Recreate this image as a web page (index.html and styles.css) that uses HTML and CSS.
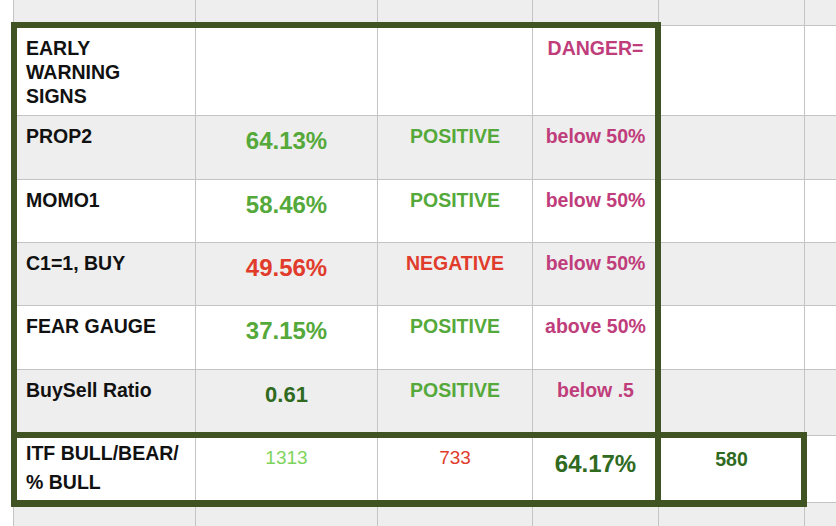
FILE: index.html
```html
<!DOCTYPE html>
<html>
<head>
<meta charset="utf-8">
<link rel="stylesheet" href="styles.css">
</head>
<body>
<div class="sheet">
  <div class="grid">
    <!-- row 0 -->
    <div class="c g"></div><div class="c g"></div><div class="c g"></div><div class="c g"></div><div class="c g"></div><div class="c g"></div>
    <!-- row 1 -->
    <div class="c w lbl first">EARLY<br>WARNING<br>SIGNS</div>
    <div class="c w"></div>
    <div class="c w"></div>
    <div class="c w mid pink first">DANGER=</div>
    <div class="c w"></div><div class="c w"></div>
    <!-- row 2 -->
    <div class="c g lbl">PROP2</div>
    <div class="c g mid num green">64.13%</div>
    <div class="c g mid stat green">POSITIVE</div>
    <div class="c g mid pink">below 50%</div>
    <div class="c g"></div><div class="c g"></div>
    <!-- row 3 -->
    <div class="c w lbl">MOMO1</div>
    <div class="c w mid num green">58.46%</div>
    <div class="c w mid stat green">POSITIVE</div>
    <div class="c w mid pink">below 50%</div>
    <div class="c w"></div><div class="c w"></div>
    <!-- row 4 -->
    <div class="c g lbl">C1=1, BUY</div>
    <div class="c g mid num red">49.56%</div>
    <div class="c g mid stat red">NEGATIVE</div>
    <div class="c g mid pink">below 50%</div>
    <div class="c g"></div><div class="c g"></div>
    <!-- row 5 -->
    <div class="c w lbl">FEAR GAUGE</div>
    <div class="c w mid num green">37.15%</div>
    <div class="c w mid stat green">POSITIVE</div>
    <div class="c w mid pink">above 50%</div>
    <div class="c w"></div><div class="c w"></div>
    <!-- row 6 -->
    <div class="c g lbl">BuySell Ratio</div>
    <div class="c g mid num small dark">0.61</div>
    <div class="c g mid stat green">POSITIVE</div>
    <div class="c g mid pink">below .5</div>
    <div class="c g"></div><div class="c g"></div>
    <!-- row 7 -->
    <div class="c w lbl itf">ITF BULL/BEAR/<br>% BULL</div>
    <div class="c w mid plain lime">1313</div>
    <div class="c w mid plain red">733</div>
    <div class="c w mid big dark">64.17%</div>
    <div class="c w mid bold580 dark">580</div>
    <div class="c w"></div>
    <!-- row 8 -->
    <div class="c g"></div><div class="c g"></div><div class="c g"></div><div class="c g"></div><div class="c g"></div><div class="c g"></div>
  </div>
  <div class="box box-main"></div>
  <div class="box box-itf"></div>
  <div class="divider"></div>
</div>
</body>
</html>
```

FILE: styles.css
```css
html, body {
  margin: 0;
  padding: 0;
  background: #ffffff;
  overflow: hidden;
}
body {
  width: 836px;
  height: 526px;
  font-family: "Liberation Sans", Arial, Helvetica, sans-serif;
}
.sheet {
  position: relative;
  width: 836px;
  height: 526px;
  overflow: hidden;
}
.grid {
  margin-left: 13px;
  padding-left: 1px;
  width: 870px;
  display: grid;
  grid-template-columns: 181px 181px 154px 125px 145px 60px;
  grid-template-rows: 25px 89px 63px 62px 62px 63px 65px 66px 40px;
  gap: 1px;
  background: #c4c4c4;
}
.c {
  box-sizing: border-box;
  font-size: 19.5px;
  line-height: 24px;
  font-weight: bold;
  padding-top: 8px;
  white-space: nowrap;
}
.g { background: #eeeeee; }
.w { background: #ffffff; }
.lbl {
  color: #111111;
  padding-left: 12px;
}
.first { padding-top: 10px; }
.itf {
  line-height: 29px;
  padding-top: 3px;
}
.mid { text-align: center; }
.num {
  font-size: 24px;
  padding-top: 13px;
}
.num.small { font-size: 22px; }
.green { color: #55a93a; }
.red { color: #e03b2b; }
.pink { color: #c03d7b; }
.dark { color: #2f6a1f; }
.lime { color: #7dd45a; }
.plain {
  font-weight: normal;
  font-size: 19px;
  padding-top: 10px;
}
.big {
  font-size: 24px;
  padding-top: 16px;
}
.bold580 {
  font-size: 19.5px;
  padding-top: 11px;
}
.box {
  position: absolute;
  box-sizing: border-box;
  border: 6px solid #405423;
}
.box-main {
  left: 11px;
  top: 22px;
  width: 650px;
  height: 416px;
}
.box-itf {
  left: 11px;
  top: 432px;
  width: 796px;
  height: 75px;
  border-bottom-width: 7px;
}
.divider {
  position: absolute;
  left: 655px;
  top: 432px;
  width: 6px;
  height: 75px;
  background: #405423;
}
```
